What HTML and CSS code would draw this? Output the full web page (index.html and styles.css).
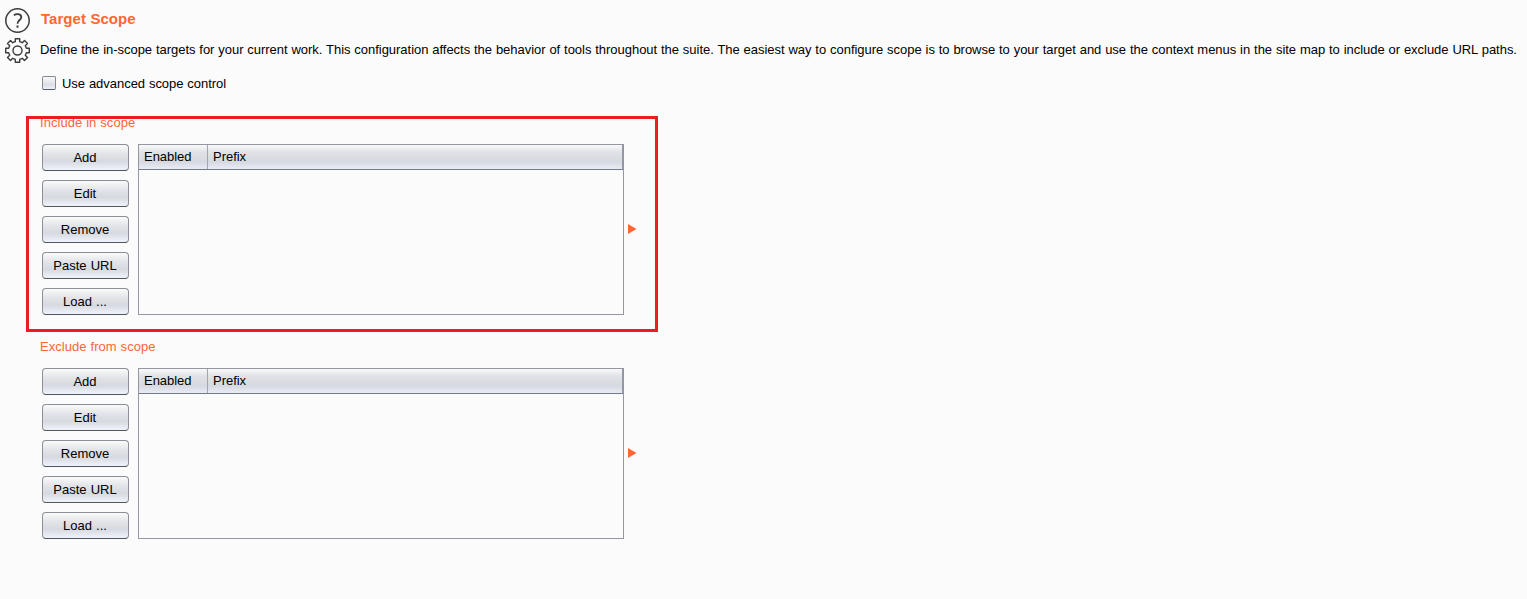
FILE: index.html
```html
<!DOCTYPE html>
<html lang="en">
<head>
<meta charset="utf-8">
<title>Target Scope</title>
<link rel="stylesheet" href="styles.css">
</head>
<body>
<div class="page">
  <aside class="rail">
    <svg class="icon" width="25" height="25" viewBox="0.5 0.5 25 25" fill="none" stroke="#3c3c3c" stroke-width="1.5">
      <circle cx="13" cy="13" r="11.7"/>
      <path d="M9.4 7.9C11.2 6.2 16.8 5.8 16.8 9.7C16.8 12.5 13 12.6 13 16.2" stroke-width="1.8"/>
      <rect x="12" y="18" width="2" height="2.2" fill="#3c3c3c" stroke="none"/>
    </svg>
    <svg class="icon" width="25" height="25" viewBox="0.5 0.5 25 25" fill="none" stroke="#3c3c3c" stroke-width="1.4" stroke-linejoin="round">
      <path d="M10.8 1.2H15.2V4.1L17.8 5.2L20 3L23 6L20.8 8.2L21.9 10.8H24.8V15.2H21.9L20.8 17.8L23 20L20 23L17.8 20.8L15.2 21.9V24.8H10.8V21.9L8.2 20.8L6 23L3 20L5.2 17.8L4.1 15.2H1.2V10.8H4.1L5.2 8.2L3 6L6 3L8.2 5.2L10.8 4.1Z"/>
      <circle cx="13" cy="13" r="4.5"/>
    </svg>
  </aside>
  <main class="main">
    <h1 class="title">Target Scope</h1>
    <p class="description">Define the in-scope targets for your current work. This configuration affects the behavior of tools throughout the suite. The easiest way to configure scope is to browse to your target and use the context menus in the site map to include or exclude URL paths.</p>
    <label class="option"><input class="checkbox" type="checkbox"><span>Use advanced scope control</span></label>
    <section class="scope">
      <h2 class="scope-title">Include in scope</h2>
      <div class="scope-body">
        <div class="buttons">
          <button class="button">Add</button>
          <button class="button">Edit</button>
          <button class="button">Remove</button>
          <button class="button">Paste URL</button>
          <button class="button">Load ...</button>
        </div>
        <div class="table">
          <div class="table-head"><div class="cell enabled">Enabled</div><div class="cell">Prefix</div></div>
        </div>
        <svg class="arrow" width="9" height="11" viewBox="0 0 9 11"><path d="M0 0L8.5 5L0 10Z" fill="#ff6633"/></svg>
      </div>
      <div class="highlight"></div>
    </section>
    <section class="scope">
      <h2 class="scope-title">Exclude from scope</h2>
      <div class="scope-body">
        <div class="buttons">
          <button class="button">Add</button>
          <button class="button">Edit</button>
          <button class="button">Remove</button>
          <button class="button">Paste URL</button>
          <button class="button">Load ...</button>
        </div>
        <div class="table">
          <div class="table-head"><div class="cell enabled">Enabled</div><div class="cell">Prefix</div></div>
        </div>
        <svg class="arrow" width="9" height="11" viewBox="0 0 9 11"><path d="M0 0L8.5 5L0 10Z" fill="#ff6633"/></svg>
      </div>
    </section>
  </main>
</div>
</body>
</html>
```
FILE: styles.css
```css
* { box-sizing: border-box; }
body {
  margin: 0;
  background: #fbfbfb;
  color: #000;
  font: 13px/16px "Liberation Sans", Arial, sans-serif;
  letter-spacing: -0.03px;
  word-spacing: 0.3px;
}
.page { display: flex; height: 599px; overflow: hidden; }
.rail {
  display: flex;
  flex: none;
  flex-direction: column;
  gap: 5px;
  width: 40px;
  padding: 8px 0 0 5px;
}
.icon { display: block; overflow: visible; }
.main { flex: 1; min-width: 0; padding-top: 10px; }
.title {
  margin: 0 0 0 1px;
  color: #ff6633;
  font-size: 15px;
  line-height: 18px;
  font-weight: bold;
  letter-spacing: 0.03px;
}
.description { margin: 14px 0 0; white-space: nowrap; }
.option {
  display: flex;
  align-items: center;
  gap: 6px;
  height: 16px;
  margin: 18px 0 0 2px;
}
.checkbox {
  appearance: none;
  width: 14px;
  height: 14px;
  margin: 0 0 2px;
  border: 1px solid #868b93;
  border-bottom-color: #555960;
  border-radius: 2px;
  background: linear-gradient(#fafafb, #dcdee5 65%, #eef1fa);
}
.scope { position: relative; height: 224px; padding-top: 23px; }
.scope-title {
  margin: 0;
  color: #ff6633;
  font-size: 13px;
  line-height: 16px;
  font-weight: normal;
  letter-spacing: 0.04px;
}
.scope-body { display: flex; margin: 13px 0 0 2px; }
.buttons { display: flex; flex-direction: column; gap: 9px; width: 87px; }
.button {
  height: 27px;
  padding: 0 1px 0 0;
  border: 1px solid #8b9098;
  border-bottom-color: #51555c;
  border-radius: 4px;
  background: linear-gradient(#fafafb 0%, #e2e4e8 35%, #d6d9df 65%, #f0f3fb 100%);
  color: #000;
  font: 13px/16px "Liberation Sans", Arial, sans-serif;
  letter-spacing: 0;
  word-spacing: 0.5px;
}
.table {
  width: 486px;
  height: 171px;
  margin-left: 9px;
  border: 1px solid #9297a1;
}
.table-head {
  display: flex;
  height: 25px;
  border-right: 1px solid #9297a1;
  border-bottom: 1px solid #737884;
  background: linear-gradient(#fafafb 0%, #e0e2e6 30%, #d6d9df 70%, #e9ecf5 100%);
}
.cell { padding: 4px 0 0 5px; }
.enabled { width: 69px; border-right: 1px solid #a2a6ae; }
.arrow { margin: 80px 0 0 4px; }
.highlight {
  position: absolute;
  top: 24px;
  left: -14px;
  width: 632px;
  height: 216px;
  border: 3px solid #ed1c24;
  pointer-events: none;
}
```
